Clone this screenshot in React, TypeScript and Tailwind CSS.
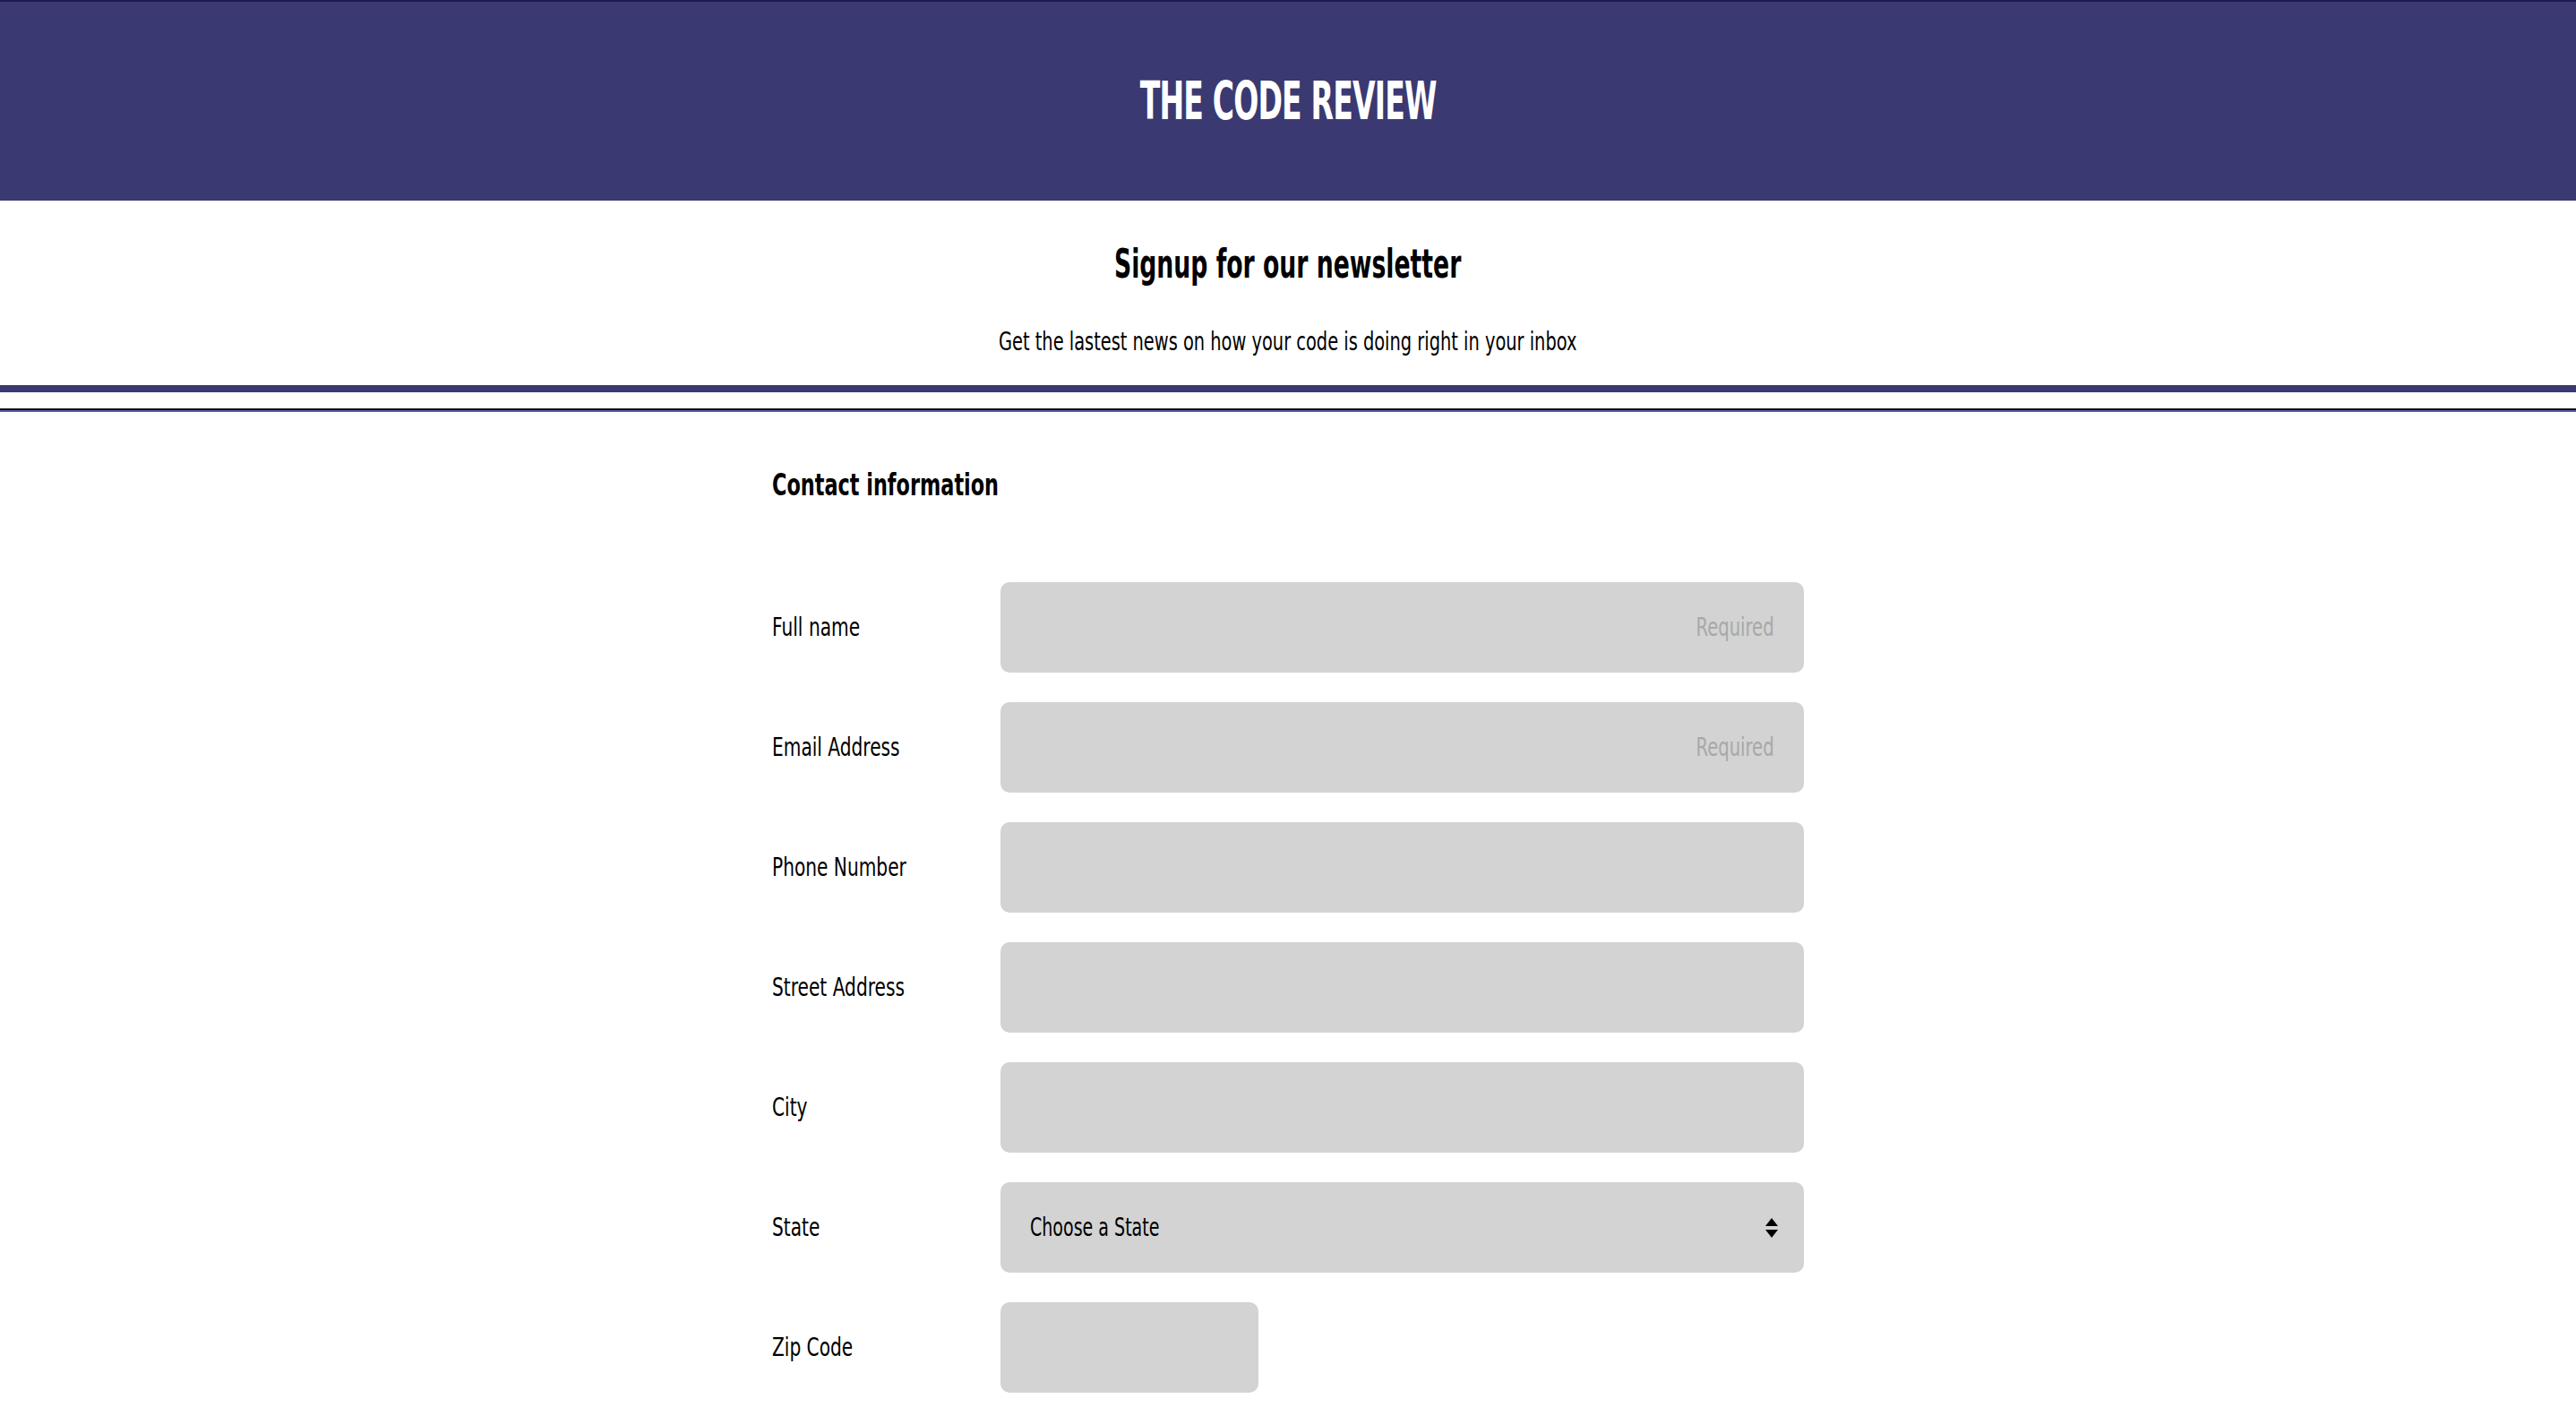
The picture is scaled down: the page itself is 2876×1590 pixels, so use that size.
const font = "font-['DejaVu_Sans',sans-serif]"

// the reference uses a very condensed face; squeeze the text horizontally to match
const Squeeze = ({ children, className }: { children: React.ReactNode; className: string }) => (
    <span className={`inline-block whitespace-nowrap ${className}`}>{children}</span>
)

const Field = ({ label, placeholder, narrow }: { label: string; placeholder?: string; narrow?: boolean }) => (
    <div className="flex items-center h-[101px]">
        <label className="w-[255px] text-[28px] text-black">
            <Squeeze className="origin-left scale-x-[0.72]">{label}</Squeeze>
        </label>
        <div className={`relative ${narrow ? "w-[288px]" : "w-[897px]"} h-[101px]`}>
            <input
                type="text"
                aria-label={label}
                className={`${font} w-full h-full rounded-[10px] bg-[#d3d3d3] px-[33px] text-right text-[28px] outline-none`}
            />
            {placeholder && (
                <span className="absolute right-[33px] top-1/2 -translate-y-1/2 pointer-events-none text-[28px] text-[#a8a8a8]">
                    <Squeeze className="origin-right scale-x-[0.7]">{placeholder}</Squeeze>
                </span>
            )}
        </div>
    </div>
)

export default function App() {
    return (
        <div className={`${font} min-h-screen bg-white`}>
            <header className="h-[224px] bg-[#3a3971] border-t-2 border-[#1d1b4d] flex items-center justify-center">
                <h1 className="text-white text-[58px] font-bold tracking-tight">
                    <Squeeze className="scale-x-[0.57]">THE CODE REVIEW</Squeeze>
                </h1>
            </header>
            <div className="text-center pt-[49px]">
                <h2 className="text-[44px] font-bold text-black leading-none">
                    <Squeeze className="scale-x-[0.606]">Signup for our newsletter</Squeeze>
                </h2>
                <p className="mt-[51px] text-[28px] text-black leading-none">
                    <Squeeze className="scale-x-[0.693]">Get the lastest news on how your code is doing right in your inbox</Squeeze>
                </p>
            </div>
            <div className="mt-[34px] h-[8px] bg-[#3a3971]" />
            <div className="mt-[18px] border-t-2 border-b-2 border-t-[#111] border-b-[#5a59b5]" />
            <main className="w-[1152px] mx-auto pb-24">
                <h3 className="mt-[64px] text-[34px] font-bold text-black leading-none">
                    <Squeeze className="origin-left scale-x-[0.658]">Contact information</Squeeze>
                </h3>
                <div className="mt-[92px] flex flex-col gap-[33px]">
                    <Field label="Full name" placeholder="Required" />
                    <Field label="Email Address" placeholder="Required" />
                    <Field label="Phone Number" />
                    <Field label="Street Address" />
                    <Field label="City" />
                    <div className="flex items-center h-[101px]">
                        <label className="w-[255px] text-[28px] text-black">
                            <Squeeze className="origin-left scale-x-[0.72]">State</Squeeze>
                        </label>
                        <div className="relative w-[897px] h-[101px]">
                            <select aria-label="State" className={`${font} w-full h-full appearance-none rounded-[10px] bg-[#d3d3d3] pl-[33px] text-[28px] text-transparent outline-none`}>
                                <option>Choose a State</option>
                            </select>
                            <span className="absolute left-[33px] top-1/2 -translate-y-1/2 pointer-events-none text-[28px] text-black">
                                <Squeeze className="origin-left scale-x-[0.68]">Choose a State</Squeeze>
                            </span>
                            <svg className="absolute right-[28px] top-1/2 -translate-y-1/2 pointer-events-none" width="16" height="26" viewBox="0 0 16 26">
                                <path d="M8 2 L15 11 L1 11 Z" fill="#000" />
                                <path d="M8 24 L15 15 L1 15 Z" fill="#000" />
                            </svg>
                        </div>
                    </div>
                    <Field label="Zip Code" narrow />
                </div>
            </main>
        </div>
    )
}
